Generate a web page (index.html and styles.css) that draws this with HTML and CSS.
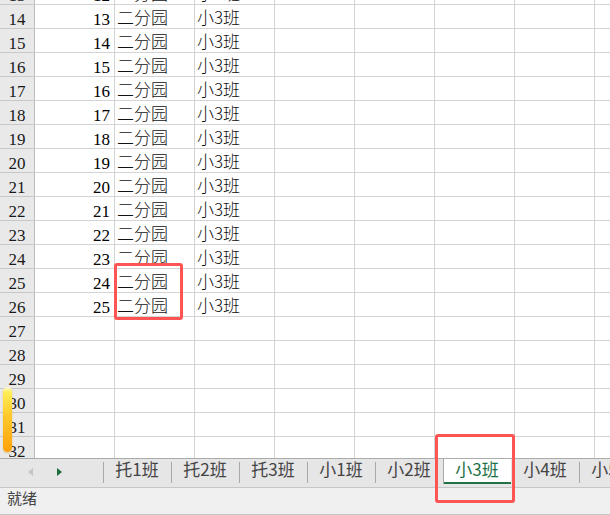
FILE: index.html
```html
<!DOCTYPE html>
<html lang="zh-CN">
<head>
    <meta charset="UTF-8">
    <meta name="viewport" content="width=device-width, initial-scale=1.0">
    <title>分班名单</title>
    <link rel="stylesheet" href="styles.css">
</head>
<body>
    <div class="workbook">
        <div class="sheet">
            <div class="grid" id="grid"></div>
            <div class="scroll-glow"></div>
        </div>
        <div class="tabbar">
            <div class="tab-nav">
                <span class="arrow prev"></span>
                <span class="arrow next"></span>
            </div>
            <div class="tabs">
                <div class="tab">托1班</div>
                <div class="tab">托2班</div>
                <div class="tab">托3班</div>
                <div class="tab">小1班</div>
                <div class="tab">小2班</div>
                <div class="tab active">小3班</div>
                <div class="tab">小4班</div>
                <div class="tab">小5班</div>
            </div>
        </div>
        <div class="statusbar">就绪</div>
        <div class="mark cells-mark"></div>
        <div class="mark tab-mark"></div>
    </div>

    <script>
        // rows 13..32, the class list ends at row 26
        const grid = document.getElementById("grid");
        for (let r = 13; r <= 32; r++) {
            const filled = r <= 26;
            const row = document.createElement("div");
            row.className = "row";
            row.innerHTML = `
                <div class="cell head">${r}</div>
                <div class="cell num">${filled ? r - 1 : ""}</div>
                <div class="cell text">${filled ? "二分园" : ""}</div>
                <div class="cell text">${filled ? "小3班" : ""}</div>
            ` + '<div class="cell"></div>'.repeat(5);
            grid.appendChild(row);
        }
    </script>
</body>
</html>
```

FILE: styles.css
```css
* {
    margin: 0;
    padding: 0;
    box-sizing: border-box;
}

body {
    width: 610px;
    height: 515px;
    overflow: hidden;
    background: #fff;
    font-family: "Noto Sans CJK SC", sans-serif;
}

.workbook {
    position: relative;
    height: 515px;
    display: flex;
    flex-direction: column;
}

/* grid */

.sheet {
    position: relative;
    height: 458px;
    overflow: hidden;
    flex-shrink: 0;
}

.grid {
    margin-top: -19px;
}

.row {
    display: grid;
    grid-template-columns: 35px repeat(8, 80px);
    height: 24px;
}

.cell {
    border-right: 1px solid #d4d4d4;
    border-bottom: 1px solid #d4d4d4;
    font-size: 17px;
    line-height: 23px;
    color: #000;
    white-space: nowrap;
    overflow: hidden;
}

.cell.head {
    background: #e9e9e9;
    border-right-color: #bcbcbc;
    border-bottom-color: #c8c8c8;
    text-align: center;
    font-family: "Liberation Serif", serif;
    padding-top: 3px;
    color: #1a1a1a;
}

.cell.num {
    text-align: right;
    font-family: "Liberation Serif", serif;
    padding: 3px 4px 0 0;
}

.cell.text {
    padding-left: 2px;
    font-weight: 300;
    color: #111;
}

.scroll-glow {
    position: absolute;
    left: 3px;
    top: 387px;
    width: 9px;
    height: 65px;
    border-radius: 5px;
    background: linear-gradient(#fbf6d8 0%, #ffee55 8%, #ffc82a 45%, #ffa10a 100%);
    box-shadow: 0 1px 2px rgba(200, 120, 0, 0.35);
}

/* sheet tabs */

.tabbar {
    height: 30px;
    flex-shrink: 0;
    display: flex;
    background: #e6e6e6;
    border-top: 1px solid #ababab;
    border-bottom: 1px solid #c6c6c6;
}

.tab-nav {
    width: 103px;
    flex-shrink: 0;
    display: flex;
    align-items: flex-start;
    gap: 24px;
    padding: 9px 0 0 28px;
}

.arrow {
    width: 0;
    height: 0;
    border-top: 4.5px solid transparent;
    border-bottom: 4.5px solid transparent;
}

.arrow.prev {
    border-right: 5px solid #c4c4c4;
}

.arrow.next {
    border-left: 5px solid #1e6b3c;
}

.tabs {
    display: flex;
}

.tab {
    position: relative;
    width: 68px;
    height: 25px;
    flex-shrink: 0;
    text-align: center;
    font-size: 17px;
    line-height: 19px;
    color: #444;
}

.tab::before {
    content: "";
    position: absolute;
    left: 0;
    top: 3px;
    width: 1px;
    height: 21px;
    background: #a8a8a8;
}

.tab.active {
    background: #fff;
    color: #1d7045;
    border-bottom: 2px solid #217346;
}

.tab.active::before {
    top: 0;
    height: 25px;
}

.tab.active + .tab::before {
    display: none;
}

/* status bar */

.statusbar {
    height: 27px;
    flex-shrink: 0;
    background: #f0f0f0;
    border-bottom: 1px solid #c6c6c6;
    padding-left: 7px;
    font-size: 15px;
    line-height: 20px;
    color: #444;
}

/* red highlight frames */

.mark {
    position: absolute;
    border: 3px solid #ff5454;
    border-radius: 3px;
}

.cells-mark {
    left: 114px;
    top: 263px;
    width: 69px;
    height: 57px;
}

.tab-mark {
    left: 435px;
    top: 434px;
    width: 80px;
    height: 69px;
}
```
